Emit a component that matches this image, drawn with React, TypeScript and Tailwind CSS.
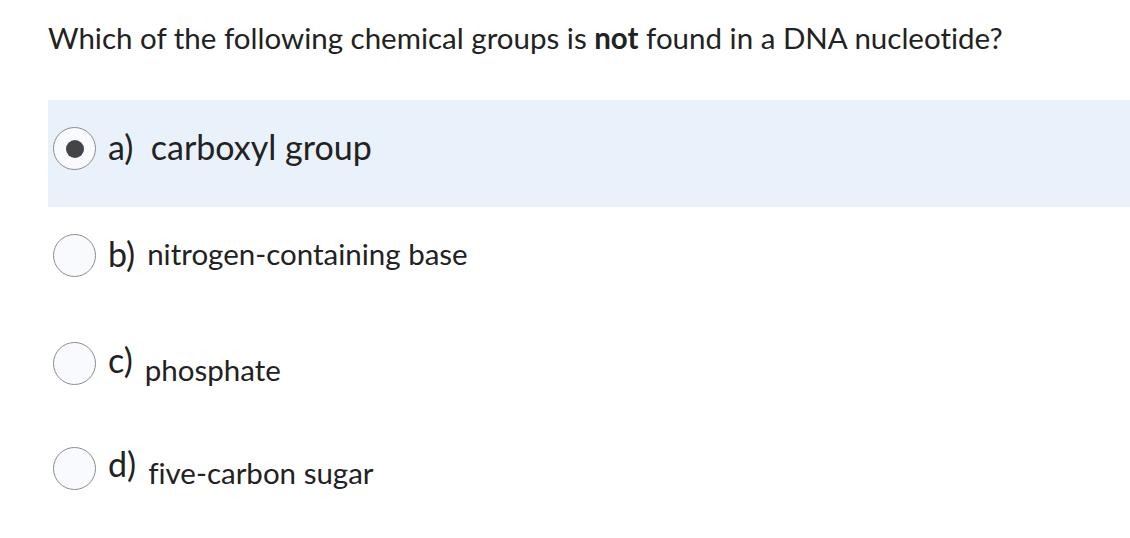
import React from 'react';

const Radio = ({ checked }: { checked?: boolean }) => (
    <div className="w-[43px] h-[43px] shrink-0 rounded-full border border-[#8c8c8c] bg-[#f9fafd] flex items-center justify-center">
        {checked && <div className="w-[18px] h-[18px] rounded-full bg-[#444]" />}
    </div>
);

export default function App() {
    return (
        <div className="w-[1130px] h-[538px] bg-white text-[#222] font-['Lato','Open_Sans',sans-serif] [font-variant-ligatures:none] pl-[48px] overflow-hidden">
            <p className="pt-[18px] h-[100px] text-[29.5px] leading-[40px]">
                Which of the following chemical groups is <b>not</b> found in a DNA nucleotide?
            </p>

            <div className="h-[107px] bg-[#e9f1fb] pl-[5px] pt-[27px]">
                <div className="flex items-center gap-[12px] h-[43px]">
                    <Radio checked />
                    <span className="text-[34px] leading-none mb-[3px]">a)&nbsp; carboxyl group</span>
                </div>
            </div>

            <div className="h-[108px] pl-[5px] pt-[27px]">
                <div className="flex items-center gap-[12px] h-[43px]">
                    <Radio />
                    <span className="text-[34px] leading-none mb-[3px]">b)</span>
                    <span className="text-[29.5px] leading-none mb-[3px]">nitrogen-containing base</span>
                </div>
            </div>

            <div className="h-[105px] pl-[5px] pt-[27px]">
                <div className="flex items-start gap-[12px] h-[43px]">
                    <Radio />
                    <span className="text-[34px] leading-none mt-[1px]">c)</span>
                    <span className="text-[29.5px] leading-none mt-[13px]">phosphate</span>
                </div>
            </div>

            <div className="h-[107px] pl-[5px] pt-[27px]">
                <div className="flex items-start gap-[12px] h-[43px]">
                    <Radio />
                    <span className="text-[34px] leading-none">d)</span>
                    <span className="text-[29.5px] leading-none mt-[11px]">five-carbon sugar</span>
                </div>
            </div>
        </div>
    );
}
